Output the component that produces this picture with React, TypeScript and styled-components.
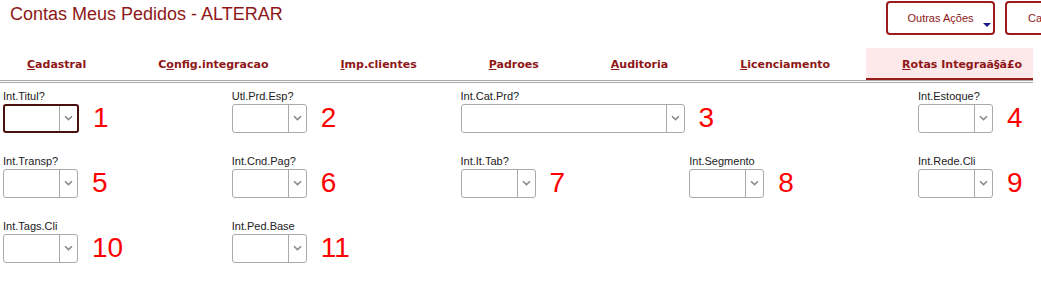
import React from 'react'
import styled, { createGlobalStyle } from 'styled-components'

const GlobalStyle = createGlobalStyle`
  html, body {
    margin: 0;
    padding: 0;
    background: #fff;
    overflow: hidden;
    font-family: "Liberation Sans", Arial, sans-serif;
  }
`

const tabs = [
  { pre: '', key: 'C', rest: 'adastral' },
  { pre: 'C', key: 'o', rest: 'nfig.integracao' },
  { pre: '', key: 'I', rest: 'mp.clientes' },
  { pre: '', key: 'P', rest: 'adroes' },
  { pre: '', key: 'A', rest: 'uditoria' },
  { pre: '', key: 'L', rest: 'icenciamento' },
  { pre: '', key: 'R', rest: 'otas Integraã§ã£o', active: true },
]

type Field = { label: string; num: string; wide?: boolean; focused?: boolean; col?: number }

const rows: Field[][] = [
  [
    { label: 'Int.Titul?', num: '1', focused: true },
    { label: 'Utl.Prd.Esp?', num: '2' },
    { label: 'Int.Cat.Prd?', num: '3', wide: true },
    { label: 'Int.Estoque?', num: '4', col: 5 },
  ],
  [
    { label: 'Int.Transp?', num: '5' },
    { label: 'Int.Cnd.Pag?', num: '6' },
    { label: 'Int.It.Tab?', num: '7' },
    { label: 'Int.Segmento', num: '8' },
    { label: 'Int.Rede.Cli', num: '9' },
  ],
  [
    { label: 'Int.Tags.Cli', num: '10' },
    { label: 'Int.Ped.Base', num: '11' },
  ],
]

const Chevron = () => (
  <svg width="9" height="6" viewBox="0 0 9 6">
    <path d="M1 1.2 L4.5 4.6 L8 1.2" fill="none" stroke="#8a8a8a" strokeWidth="1.6" />
  </svg>
)

const App = () => {
  return (
    <Page>
      <GlobalStyle />
      <Header>
        <Title>Contas Meus Pedidos - ALTERAR</Title>
        <Buttons>
          <ActionButton $width={109}>
            Outras Ações
            <Caret />
          </ActionButton>
          <ActionButton $width={90}>Cancelar</ActionButton>
        </Buttons>
      </Header>

      <TabStrip>
        {tabs.map((t) => (
          <Tab key={t.rest} $active={!!t.active}>
            {t.pre}
            <u>{t.key}</u>
            {t.rest}
          </Tab>
        ))}
      </TabStrip>

      <Form>
        {rows.map((row, i) =>
          row.map((f) => (
            <FieldBox key={f.label} $wide={!!f.wide} $col={f.col} $row={i + 1}>
              <Label>{f.label}</Label>
              <Line>
                <Select $wide={!!f.wide} $focused={!!f.focused}>
                  <Value />
                  <Arrow>
                    <Chevron />
                  </Arrow>
                </Select>
                <Num>{f.num}</Num>
              </Line>
            </FieldBox>
          ))
        )}
      </Form>
    </Page>
  )
}

export default App

const Page = styled.div`
  width: 1041px;
  height: 283px;
  overflow: hidden;
`
const Header = styled.div`
  width: 1105px;
  height: 48px;
  padding: 0 10px;
  box-sizing: border-box;
  display: flex;
  align-items: flex-start;
`
const Title = styled.div`
  font-size: 18px;
  line-height: 21px;
  margin-top: 4px;
  color: #8e1717;
`
const Buttons = styled.div`
  margin-left: auto;
  display: flex;
  gap: 10px;
  padding-top: 1px;
`
const ActionButton = styled.div<{ $width: number }>`
  position: relative;
  width: ${(p) => p.$width}px;
  height: 34px;
  box-sizing: border-box;
  border: 2px solid #9b1c1c;
  border-radius: 4px;
  display: flex;
  align-items: center;
  justify-content: center;
  font-size: 11px;
  color: #8e1717;
  padding-bottom: 1px;
`
const Caret = styled.span`
  position: absolute;
  right: 2px;
  bottom: 6px;
  width: 0;
  height: 0;
  border-left: 4px solid transparent;
  border-right: 4px solid transparent;
  border-top: 4px solid #1a1a8c;
`
const TabStrip = styled.div`
  margin-right: 8px;
  display: flex;
  overflow: hidden;
  border-bottom: 3px double #aaa;
`
const Tab = styled.div<{ $active: boolean }>`
  flex-shrink: 0;
  height: 32px;
  box-sizing: border-box;
  padding: 2px 36px 0;
  line-height: 29px;
  white-space: nowrap;
  font-family: "DejaVu Sans", Verdana, sans-serif;
  font-weight: bold;
  font-size: 11px;
  color: #8e1717;
  background: ${(p) => (p.$active ? '#fde8ea' : 'transparent')};
  border-bottom: 2px solid ${(p) => (p.$active ? '#9b1c1c' : 'transparent')};

  &:first-child {
    padding-left: 27px;
  }
`
const Form = styled.div`
  padding: 7px 0 0 3px;
  display: grid;
  grid-template-columns: repeat(5, 228.75px);
  row-gap: 22px;
`
const FieldBox = styled.div<{ $wide: boolean; $col?: number; $row: number }>`
  grid-row: ${(p) => p.$row};
  ${(p) => (p.$col ? `grid-column: ${p.$col};` : '')}
  ${(p) => (p.$wide ? 'grid-column: span 2;' : '')}
`
const Label = styled.div`
  font-size: 11px;
  line-height: 13px;
  color: #222;
`
const Line = styled.div`
  display: flex;
  align-items: center;
  gap: 14px;
`
const Select = styled.div<{ $wide: boolean; $focused: boolean }>`
  width: ${(p) => (p.$wide ? 224 : p.$focused ? 76 : 75)}px;
  height: 29px;
  box-sizing: border-box;
  display: flex;
  border: ${(p) => (p.$focused ? '2px solid #4a1010' : '1px solid #aaa')};
  border-radius: 3px;
  background: #fff;
`
const Value = styled.div`
  flex: 1;
`
const Arrow = styled.div`
  width: 17px;
  border-left: 1px solid #aaa;
  display: flex;
  align-items: center;
  justify-content: center;
`
const Num = styled.div`
  font-size: 28px;
  line-height: 30px;
  color: #ff0000;
`
